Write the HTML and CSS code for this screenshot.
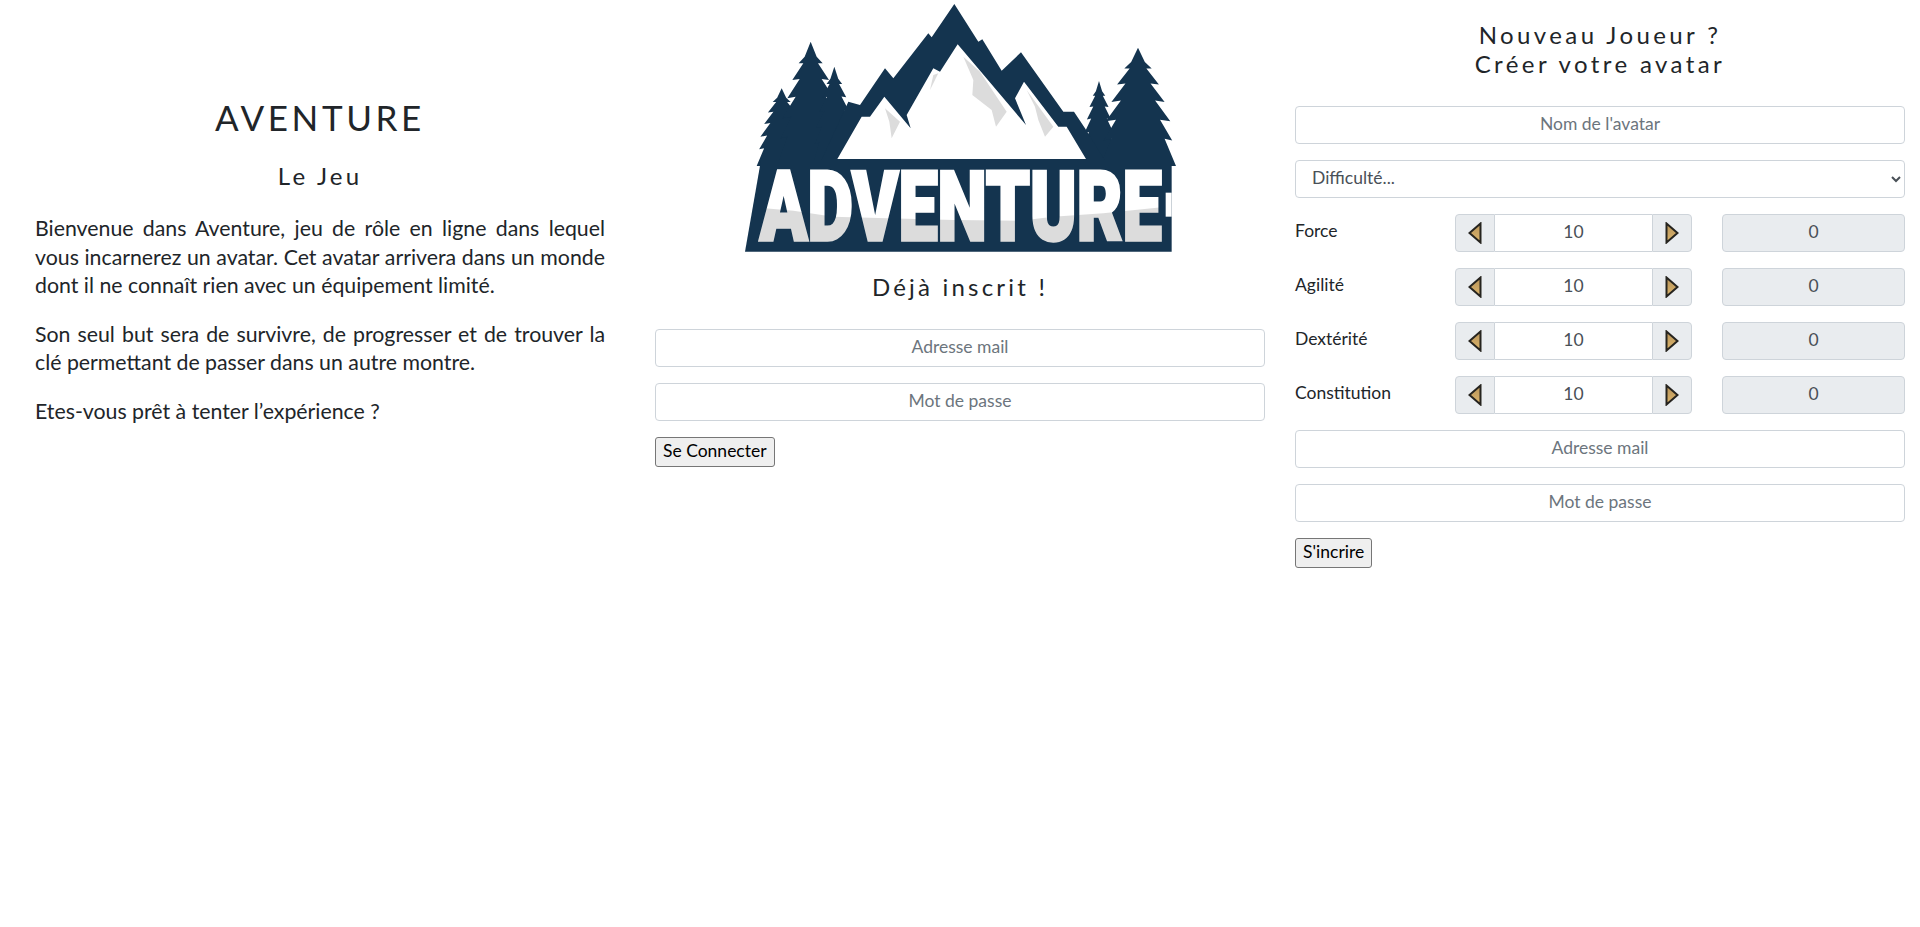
FILE: index.html
```html
<!DOCTYPE html>
<html lang="fr">

<head>
    <meta charset="UTF-8">
    <meta name="viewport" content="width=device-width, initial-scale=1.0">
    <title>Aventure</title>
    <link rel="stylesheet" href="styles.css">
</head>

<body>
    <main class="page">
        <section class="col intro">
            <h1>AVENTURE</h1>
            <h2 class="intro-sub">Le Jeu</h2>
            <p>Bienvenue dans Aventure, jeu de rôle en ligne dans lequel vous incarnerez un avatar. Cet avatar arrivera dans un monde dont il ne connaît rien avec un équipement limité.</p>
            <p>Son seul but sera de survivre, de progresser et de trouver la clé permettant de passer dans un autre montre.</p>
            <p>Etes-vous prêt à tenter l’expérience ?</p>
        </section>

        <section class="col login">
            <svg class="logo" viewBox="0 0 1440 810" role="img" aria-label="Adventure">
                <defs>
                    <polygon id="tree" points="100,0 118,45 136,65 122,65 155,115 133,112 170,170 145,165 185,230 158,225 190,290 170,285 200,370 0,370 30,285 10,290 42,225 15,230 55,165 30,170 67,112 45,115 78,65 64,65 82,45" />
                    <linearGradient id="gold" x1="0" y1="0" x2="0" y2="1">
                        <stop offset="0" stop-color="#b8945a" />
                        <stop offset="1" stop-color="#dcb56c" />
                    </linearGradient>
                    <pattern id="snow" patternUnits="userSpaceOnUse" x="0" y="0" width="1440" height="810">
                        <rect width="1440" height="810" fill="#fff" />
                        <polygon fill="#dcdcdc" points="100,622 220,632 340,650 500,655 700,660 900,662 1000,650 1150,640 1340,620 1340,760 100,760" />
                    </pattern>
                </defs>
                <g class="logo-dark">
                    <use href="#tree" transform="translate(110 265) scale(.75 .63)" />
                    <use href="#tree" transform="translate(172 125) scale(1 1)" />
                    <use href="#tree" transform="translate(278 200) scale(.65 .8)" />
                    <use href="#tree" transform="translate(1085 243) scale(.52 .68)" />
                    <use href="#tree" transform="translate(1140 143) scale(1.14 .96)" />
                    <polygon points="300,490 385,305 420,315 495,205 520,235 625,100 635,112 703,12 775,125 787,118 845,212 903,157 1030,335 1062,335 1095,385 1160,490" />
                    <polygon points="75,755 123,480 1355,480 1355,755" />
                </g>
                <polygon fill="#fff" points="352,477 425,350 450,350 493,290 572,385 560,345 640,205 660,215 713,133 918,375 885,295 912,245 1015,380 1040,380 1098,477" />
                <g fill="#dcdcdc">
                    <polygon points="730,170 760,240 757,285 815,330 828,380 860,335 780,215" />
                    <polygon points="495,325 508,365 515,415 540,365" />
                    <polygon points="640,225 655,220 630,270" />
                    <polygon points="920,270 945,320 955,360 975,410 1000,380" />
                </g>
                <text class="logo-text" x="119" y="721" textLength="1206" lengthAdjust="spacingAndGlyphs" fill="url(#snow)" stroke="url(#snow)">ADVENTURE</text>
                <rect x="1337" y="578" width="18" height="72" fill="#fff" />
            </svg>
            <h2 class="login-title">Déjà inscrit !</h2>
            <form class="stack">
                <input class="field" type="email" placeholder="Adresse mail">
                <input class="field" type="password" placeholder="Mot de passe">
                <div><button type="button" class="btn">Se Connecter</button></div>
            </form>
        </section>

        <section class="col signup">
            <h2 class="signup-title">Nouveau Joueur ?<br>Créer votre avatar</h2>
            <form class="stack">
                <input class="field" type="text" placeholder="Nom de l'avatar">
                <select class="field field-select">
                    <option>Difficulté...</option>
                </select>

                <div class="stat-row">
                    <label class="stat-name">Force</label>
                    <div class="stepper">
                        <span class="step"><svg class="arrow" viewBox="0 0 14 22"><polygon points="12.5,1.5 12.5,20.5 1.5,11" /></svg></span>
                        <input class="step-value" type="text" value="10">
                        <span class="step"><svg class="arrow" viewBox="0 0 14 22"><polygon points="1.5,1.5 1.5,20.5 12.5,11" /></svg></span>
                    </div>
                    <input class="field stat-bonus" type="text" value="0" disabled>
                </div>
                <div class="stat-row">
                    <label class="stat-name">Agilité</label>
                    <div class="stepper">
                        <span class="step"><svg class="arrow" viewBox="0 0 14 22"><polygon points="12.5,1.5 12.5,20.5 1.5,11" /></svg></span>
                        <input class="step-value" type="text" value="10">
                        <span class="step"><svg class="arrow" viewBox="0 0 14 22"><polygon points="1.5,1.5 1.5,20.5 12.5,11" /></svg></span>
                    </div>
                    <input class="field stat-bonus" type="text" value="0" disabled>
                </div>
                <div class="stat-row">
                    <label class="stat-name">Dextérité</label>
                    <div class="stepper">
                        <span class="step"><svg class="arrow" viewBox="0 0 14 22"><polygon points="12.5,1.5 12.5,20.5 1.5,11" /></svg></span>
                        <input class="step-value" type="text" value="10">
                        <span class="step"><svg class="arrow" viewBox="0 0 14 22"><polygon points="1.5,1.5 1.5,20.5 12.5,11" /></svg></span>
                    </div>
                    <input class="field stat-bonus" type="text" value="0" disabled>
                </div>
                <div class="stat-row">
                    <label class="stat-name">Constitution</label>
                    <div class="stepper">
                        <span class="step"><svg class="arrow" viewBox="0 0 14 22"><polygon points="12.5,1.5 12.5,20.5 1.5,11" /></svg></span>
                        <input class="step-value" type="text" value="10">
                        <span class="step"><svg class="arrow" viewBox="0 0 14 22"><polygon points="1.5,1.5 1.5,20.5 12.5,11" /></svg></span>
                    </div>
                    <input class="field stat-bonus" type="text" value="0" disabled>
                </div>

                <input class="field" type="email" placeholder="Adresse mail">
                <input class="field" type="password" placeholder="Mot de passe">
                <div><button type="button" class="btn">S'incrire</button></div>
            </form>
        </section>
    </main>
</body>

</html>
```

FILE: styles.css
```css
body {
    margin: 0;
    font-family: Lato, "Noto Sans", sans-serif;
    font-size: 16px;
    line-height: 1.5;
    color: #212529;
    background-color: #fff;
}

.page {
    display: grid;
    grid-template-columns: repeat(3, 1fr);
}

.col {
    padding: 0 15px;
}

h1,
h2 {
    margin: 0;
    font-weight: 400;
    text-align: center;
    line-height: 1.2;
}

/* left column */
.intro {
    padding: 0 35px;
}

.intro h1 {
    margin-top: 96px;
    font-size: 35px;
    letter-spacing: 3.6px;
}

.intro-sub {
    margin-top: 24px;
    margin-bottom: 23px;
    font-size: 24px;
    letter-spacing: 3.2px;
}

.intro p {
    margin: 0 0 19.5px;
    font-size: 21.3px;
    line-height: 28.8px;
    text-align: justify;
}

/* logo */
.logo {
    display: block;
    width: 480px;
    height: 270px;
    margin: 0 auto;
}

.logo-dark {
    fill: #14344f;
}

.logo-text {
    font-family: Roboto, sans-serif;
    font-size: 290px;
    font-weight: 900;
    stroke-width: 10px;
    stroke-linejoin: miter;
}

.login-title {
    margin-top: 3px;
    margin-bottom: 27px;
    font-size: 24px;
    letter-spacing: 3.2px;
}

.signup-title {
    margin-top: 21px;
    margin-bottom: 27px;
    font-size: 24px;
    letter-spacing: 3.4px;
}

/* forms */
.stack {
    display: flex;
    flex-direction: column;
    gap: 16px;
}

.field {
    box-sizing: border-box;
    width: 100%;
    height: 38px;
    padding: 5px 12px 7px;
    font-family: inherit;
    font-size: 17.5px;
    color: #495057;
    text-align: center;
    background-color: #fff;
    border: 1px solid #ced4da;
    border-radius: 4px;
}

.field::placeholder {
    color: #6c757d;
}

.field-select {
    text-align: left;
}

.field:disabled {
    background-color: #e9ecef;
}

.btn {
    height: 30px;
    padding: 0 7px 2px;
    font-family: inherit;
    font-size: 17.5px;
    color: #000;
    background-color: #efefef;
    border: 1px solid #767676;
    border-radius: 3px;
}

.stat-row {
    display: grid;
    grid-template-columns: 130px 237px 183px;
    column-gap: 30px;
    align-items: center;
}

.stat-name {
    font-size: 17.5px;
    margin-top: -2px;
}

.stepper {
    display: flex;
    height: 38px;
}

.step {
    display: flex;
    align-items: center;
    justify-content: center;
    width: 40px;
    box-sizing: border-box;
    background-color: #e9ecef;
    border: 1px solid #ced4da;
    border-radius: 4px 0 0 4px;
}

.step:last-child {
    border-radius: 0 4px 4px 0;
}

.step-value {
    flex: 1;
    min-width: 0;
    box-sizing: border-box;
    padding: 0 2px 2px;
    font-family: inherit;
    font-size: 17.5px;
    color: #495057;
    text-align: center;
    background-color: #fff;
    border: 1px solid #ced4da;
    border-width: 1px 0;
}

.arrow {
    width: 14px;
    height: 22px;
    fill: url(#gold);
    stroke: #26241f;
    stroke-width: 2;
}
```
